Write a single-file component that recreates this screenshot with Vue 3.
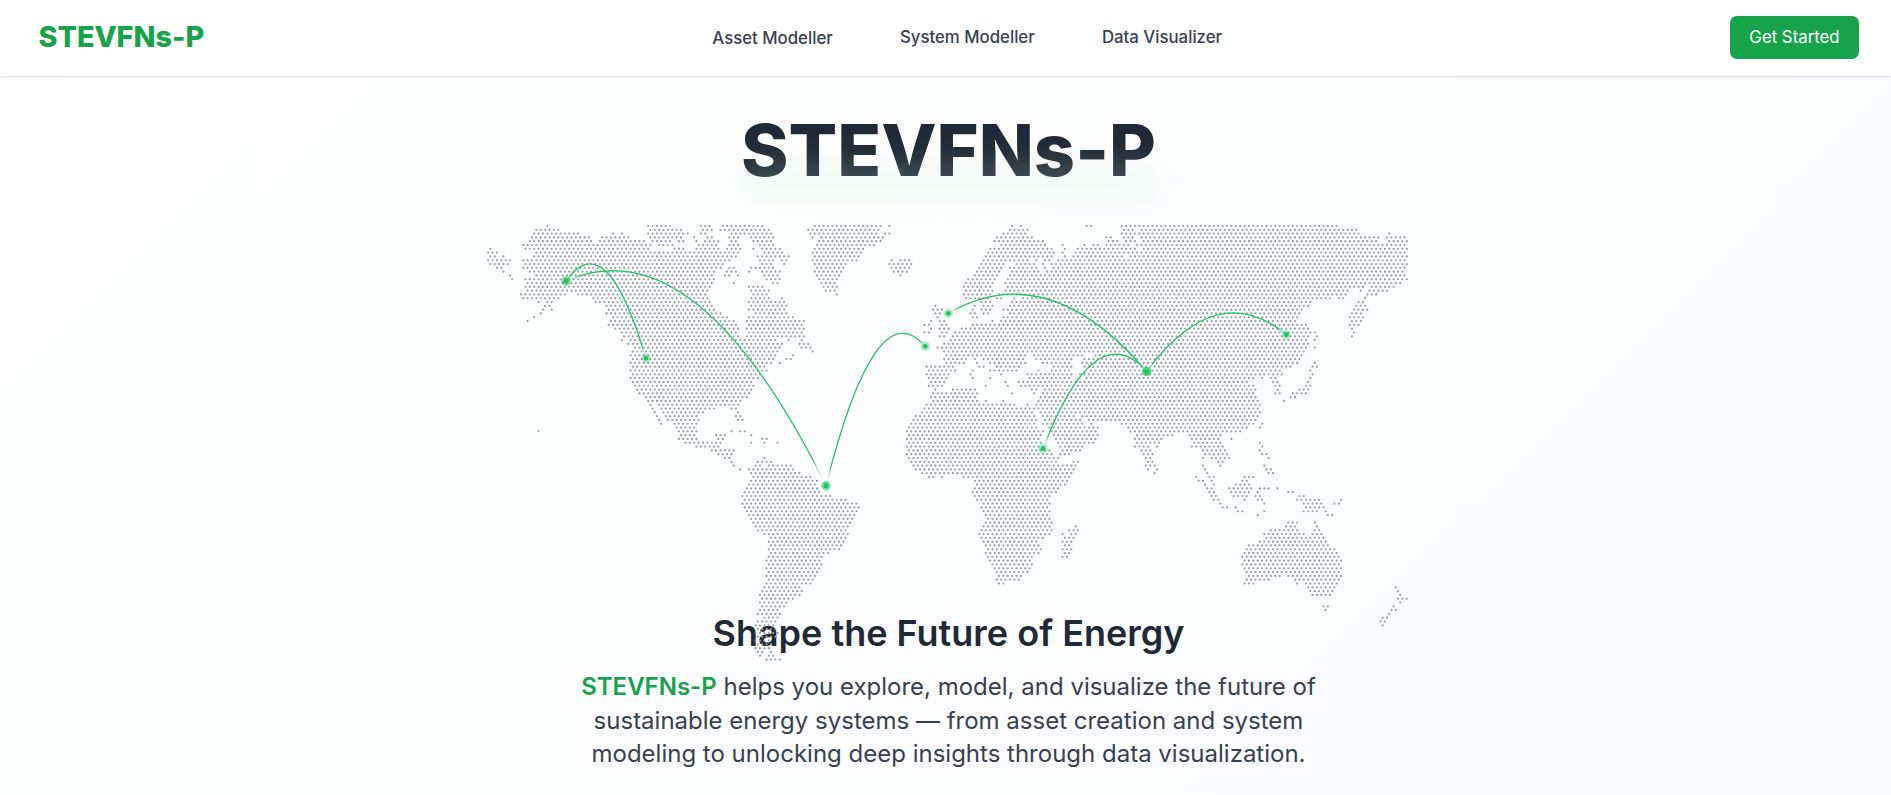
<script setup>
// Horizontal runs of land, one entry per dot row: pairs of start and end.
const land = [
  '202 202 505 570 662 690 728 846 1004 1201 1228 1228 1596 1596 1622 1622 1819 1832 1925 2570',
  '167 236 512 604 667 697 718 869 985 1195 1589 1642 1932 1958 1985 2630',
  '163 294 400 400 425 425 505 622 662 680 754 872 989 1190 1215 1228 1570 1635 1925 1960 1978 2638 2728 2728',
  '158 328 367 445 512 600 645 645 685 697 748 768 813 880 998 998 1025 1210 1550 1655 1880 1895 1932 1958 1985 2698 2722 2775',
  '150 328 355 492 520 570 595 610 653 653 682 710 754 767 820 872 1018 1205 1544 1688 1887 1912 1938 1965 1990 2690 2728 2780',
  '130 505 535 560 582 582 650 715 748 775 838 877 1010 1185 1557 1695 1747 1747 1813 1813 1838 1852 1880 1948 1975 2768',
  '30 30 135 510 583 610 650 715 740 780 820 820 845 900 1004 1150 1531 1715 1753 1753 1793 1965 1985 2780',
  '25 50 163 775 850 910 998 1145 1525 1725 1747 1747 1787 1960 1975 2770',
  '30 45 70 70 158 770 838 925 1005 1135 1515 1710 1755 1755 1780 1930 1958 2780',
  '25 90 125 750 845 885 905 920 998 1130 1232 1232 1260 1290 1510 1645 1670 1670 1695 1710 1735 2770',
  '30 85 135 730 850 875 912 912 1005 1100 1228 1293 1502 1570 1603 1662 1688 1688 1715 2775',
  '50 65 128 720 748 762 813 885 1010 1095 1235 1290 1496 1565 1595 1675 1695 1695 1725 2780',
  '70 70 145 700 740 768 807 807 845 900 1005 1085 1240 1280 1490 1560 1590 1675 1700 2768',
  '90 90 165 700 734 747 773 773 850 890 1010 1080 1260 1260 1485 1550 1585 2775',
  '97 97 135 700 858 898 1018 1070 1465 1545 1580 2780',
  '145 690 760 760 880 892 1023 1065 1458 1540 1575 2760',
  '135 685 807 847 1030 1070 1452 1533 1580 2655 2675 2742',
  '142 680 813 870 1037 1065 1458 1540 1575 2600 2642 2642 2668 2720',
  '122 255 290 675 820 860 1070 1070 1452 1535 1557 2595 2662 2690',
  '130 240 340 680 813 867 905 905 1458 1525 1545 1570 1605 1605 1630 2550 2575 2590 2655 2655',
  '175 175 200 215 345 690 807 880 898 912 1505 1530 1590 2490 2635 2650',
  '195 210 380 690 813 925 1366 1366 1480 1480 1505 1535 1595 2485 2630 2655',
  '188 188 213 213 380 700 807 915 1360 1385 1478 1478 1505 1530 1570 2465 2620 2660',
  '183 183 385 720 825 925 1370 1385 1472 1485 1510 1525 1585 2457 2615 2645',
  '162 162 400 740 807 940 1377 1377 1478 1492 1570 2450 2607 2645',
  '142 142 395 765 800 965 1352 1352 1377 1392 1537 1537 1565 2443 2615 2640',
  '385 385 400 765 807 965 1335 1350 1385 1400 1478 1525 1545 2480 2607 2635',
  '412 770 800 970 1352 1352 1375 1410 1445 2485 2617 2617',
  '420 770 807 965 1333 1345 1380 1405 1430 2505 2623 2623',
  '430 780 800 970 1378 1392 1425 2485 2510 2510 2617 2617',
  '425 425 450 890 925 925 965 965 1417 2482 2505 2505',
  '450 905 957 985 1395 2488', '465 900 965 990 1373 2475 2505 2505', '460 892 998 998 1392 2470',
  '455 885 938 938 1400 1640 1665 1810 1840 2465',
  '460 885 920 932 1392 1460 1490 1490 1515 1630 1670 1680 1700 1770 1813 2457',
  '452 870 898 898 1400 1452 1490 1490 1530 1630 1685 1765 1810 2457 2503 2503',
  '460 850 1338 1415 1500 1510 1555 1610 1725 1770 1815 2430 2498 2510',
  '452 855 1345 1430 1478 1478 1525 1615 1675 1675 1720 1770 1835 2400 2490 2490',
  '458 845 1338 1410 1470 1470 1558 1558 1637 1770 1805 2405 2498 2498',
  '452 830 1345 1405 1478 1478 1530 1530 1645 1770 1825 2325 2347 2347 2372 2385 2490 2490',
  '458 820 1350 1395 1577 1577 1620 2300 2378 2392 2485 2485',
  '465 825 1350 1385 1515 1515 1583 1583 1625 2320 2385 2398 2477 2490',
  '472 815 1365 1365 1417 1485 1655 1670 1695 2325 2392 2392 2458 2485',
  '478 808 1360 1490 1597 1597 1662 1662 1690 2322 2385 2398 2438 2477',
  '498 800 1352 1485 1685 2325 2432 2445', '505 785 1360 1492 1515 1515 1570 1570 1680 2335 2412 2412',
  '510 510 537 775 1340 1605 1640 1640 1675 2340', '518 518 545 700 755 765 1333 1665 1680 2335',
  '525 525 550 668 770 770 1325 1655 1685 2340', '530 530 557 650 768 780 1307 1660 1690 1785 1805 2330',
  '537 537 563 650 775 787 1300 1665 1698 1795 1825 2325',
  '543 543 583 650 1293 1665 1695 1805 1832 1832 1925 2320 2347 2347',
  '590 643 1287 1675 1702 1855 1940 2300 2340 2340',
  '175 175 597 650 755 755 780 793 1280 1690 1710 1850 1950 2285',
  '603 643 710 732 813 813 1287 1682 1715 1855 1972 2078 2130 2225',
  '597 650 715 728 847 860 1280 1675 1725 1845 1970 2050 2137 2215 2255 2255',
  '615 725 813 813 853 853 892 892 1287 1688 1732 1835 1977 2040 2140 2225 2340 2340',
  '650 715 1280 1675 1740 1805 1970 2000 2030 2030 2137 2230 2347 2347',
  '695 760 1287 1705 1745 1800 1985 2015 2165 2235 2340 2340',
  '715 755 1280 1715 1740 1765 1990 2015 2175 2240 2347 2360',
  '734 747 853 853 1287 1735 1998 2015 2170 2170 2195 2248 2365 2365',
  '755 755 835 870 1293 1725 1780 1795 2005 2018 2215 2227',
  '760 760 827 840 865 932 1300 1790 2000 2025 2168 2168 2220 2220 2353 2353',
  '780 780 807 940 1307 1785 2007 2007 2030 2030 2175 2175 2360 2373',
  '813 960 1325 1775 2025 2025 2182 2182 2365 2378', '820 990 1347 1360 1385 1385 1450 1770 2148 2148 2188 2200 2293 2320',
  '813 1010 1485 1765 2155 2168 2195 2195 2285 2300', '807 1010 1490 1755 2175 2175 2202 2202 2265 2305',
  '800 1005 1485 1738 2182 2195 2247 2315 2340 2365 2392 2392', '793 1020 1478 1730 2188 2202 2253 2307 2332 2332 2425 2438',
  '787 1050 1485 1710 2195 2208 2260 2300 2327 2340 2458 2472', '793 1100 1490 1702 2202 2215 2293 2293 2333 2347 2450 2517 2583 2583',
  '787 1133 1510 1710 2222 2222 2353 2353 2470 2525 2563 2577', '793 1140 1505 1703 2228 2240 2267 2267 2478 2530',
  '800 1130 1510 1710 2275 2287 2353 2353 2470 2510 2537 2537', '807 1125 1515 1702 2333 2333 2543 2557',
  '813 1120 1525 1710', '820 1112 1518 1715 2425 2452 2505 2505', '827 1105 1512 1710 1785 1785 2418 2445 2510 2510',
  '832 1100 1505 1715 1767 1792 2372 2452 2505 2518', '853 1100 1498 1708 1748 1748 1773 1787 2353 2472 2498 2525',
  '872 1098 1505 1688 1755 1780 2360 2530', '867 1093 1512 1670 1748 1773 2340 2538', '873 1087 1518 1677 1755 1768 2307 2543',
  '867 1078 1525 1677 1748 1773 2300 2563', '873 1045 1518 1675 1755 1768 2293 2570', '867 1025 1525 1655 1748 1760 2287 2577',
  '860 1020 1531 1650 2293 2583', '867 1025 1538 1655 2287 2577', '860 1020 1544 1650 2293 2583', '867 1012 1550 1645 2300 2577',
  '860 1005 1557 1622 2307 2398 2425 2583', '867 1000 1550 1618 2300 2367 2445 2577', '860 992 1557 1570 2293 2320 2452 2452 2478 2570',
  '853 960 2485 2563 2747 2747', '847 965 2492 2557 2753 2753', '840 960 2498 2550 2760 2760', '847 938 2753 2780',
  '840 920 2760 2760', '847 913 2530 2543 2740 2740', '840 892 2537 2537 2735 2747', '833 900 2728 2728', '853 892 2708 2720',
  '833 885 2702 2715', '827 880 2708 2708', '833 885', '827 892', '833 885', '827 870', '833 875', '827 865',
  '833 847 872 872', '840 840 865 878', '860 900'
]
const PITCH = 4.385
const ROW = 3.803

// One path per row, every dot snapped to the staggered grid.
const rows = land.map((text, r) => {
  const v = text.split(' ').map(Number)
  const phase = 59.33 + (r % 2) * PITCH / 2
  const y = 2 + r * ROW
  const xs = []
  for (let i = 0; i < v.length; i += 2) {
    const a = Math.round((v[i] / 3 - 8 - phase) / PITCH)
    const b = Math.round((v[i + 1] / 3 - 8 - phase) / PITCH)
    for (let k = a; k <= b; k++) xs.push(phase + k * PITCH)
  }
  return xs.map(x => `M${(x - 1.1).toFixed(2)} ${y.toFixed(2)}a1.1 1.1 0 1 0 2.2 0a1.1 1.1 0 1 0-2.2 0`).join('')
})

const P = {
  alaska: [78, 57], west: [158, 134.3], brazil: [338, 261.7], lisbon: [437.3, 122.3],
  london: [460.3, 89.3], delhi: [658.7, 147.4], vladivostok: [798.3, 110.7], nairobi: [555, 224.5]
}
const routes = [['alaska', 'west'], ['alaska', 'brazil'], ['brazil', 'lisbon'], ['london', 'delhi'], ['delhi', 'vladivostok'], ['nairobi', 'delhi']]
const arcs = routes.map(([a, b]) => {
  const [x1, y1] = P[a]
  const [x2, y2] = P[b]
  return `M${x1} ${y1}Q${(x1 + x2) / 2} ${Math.min(y1, y2) - 57.5} ${x2} ${y2}`
})
const pins = routes.flat().map(n => P[n])
</script>

<template>
  <div class="page">
    <header class="bar">
      <div class="logo">STEVFNs-P</div>
      <nav class="nav">
        <a class="low">Asset Modeller</a>
        <a>System Modeller</a>
        <a>Data Visualizer</a>
      </nav>
      <button class="cta">Get Started</button>
    </header>
    <main class="hero">
      <h1 class="title"><span>STEVFNs-P</span><i class="glow"></i></h1>
      <div class="map">
        <svg width="920" height="460" viewBox="0 0 920 460">
          <defs>
            <linearGradient id="route">
              <stop offset="0" stop-color="#fff" stop-opacity="0" />
              <stop offset=".05" stop-color="#22c55e" />
              <stop offset=".95" stop-color="#22c55e" />
              <stop offset="1" stop-color="#fff" stop-opacity="0" />
            </linearGradient>
          </defs>
          <g fill="#949aa8"><path v-for="(d, i) in rows" :key="i" :d="d" /></g>
          <g fill="none" stroke="url(#route)" stroke-width="1.3"><path v-for="d in arcs" :key="d" :d="d" /></g>
          <g fill="#22c55e">
            <template v-for="(p, i) in pins" :key="i">
              <circle :cx="p[0]" :cy="p[1]" r="2.4" />
              <circle :cx="p[0]" :cy="p[1]" r="4.7" opacity=".35" />
            </template>
          </g>
        </svg>
      </div>
      <h2 class="headline">Shape the Future of Energy</h2>
      <p class="lead"><b>STEVFNs-P</b> helps you explore, model, and visualize the future of<br>sustainable energy systems — from asset creation and system<br>modeling to unlocking deep insights through data visualization.</p>
    </main>
  </div>
</template>

<style>
html, body { overflow: hidden; }
</style>
<style scoped>
.page {
  height: 795px;
  display: flex;
  flex-direction: column;
  overflow: hidden;
  font-family: Inter, "Liberation Sans", sans-serif;
  background: linear-gradient(135deg, #fefffe 0%, #fdfefe 35%, #fbfcff 75%, #fbfcff 100%);
}
.bar {
  position: relative;
  z-index: 2;
  flex: none;
  height: 76px;
  box-sizing: border-box;
  padding: 0 32px 0 38.4px;
  display: flex;
  justify-content: space-between;
  align-items: center;
  background: #fff;
  box-shadow: 0 1px 3px rgba(0, 0, 0, .1), 0 1px 2px -1px rgba(0, 0, 0, .1);
}
.logo { color: #16a34a; font-size: 28.8px; font-weight: 800; line-height: 36px; margin-top: -3px; }
.nav { display: flex; gap: 67.2px; color: #374151; font-size: 16.8px; font-weight: 500; line-height: 24px; }
.nav a { margin-top: -1px; margin-bottom: 1px; }
.nav .low { margin-top: 0; margin-bottom: 0; }
.cta {
  width: 129px;
  height: 43px;
  margin-top: -1px;
  padding: 0 0 2px;
  border: 0;
  border-radius: 7px;
  background: #16a34a;
  color: #fff;
  font: 400 16.8px/24px Inter, "Liberation Sans", sans-serif;
}
.hero { display: flex; flex-direction: column; align-items: center; padding-left: 6px; }
.title {
  position: relative;
  margin: 26px 0 0;
  height: 96px;
  font-size: 72px;
  font-weight: 800;
  line-height: 96px;
  color: #1f2937;
}
.glow {
  position: absolute;
  left: 0;
  right: 0;
  top: 65px;
  height: 30px;
  background: #bbf0d0;
  opacity: .25;
  filter: blur(16px);
}
.map { position: relative; z-index: 1; width: 920px; height: 460px; margin: 26px 1px 0 0; }
.map svg { display: block; overflow: visible; }
.headline { margin: -71px 0 0; font-size: 36px; font-weight: 600; line-height: 40px; color: #1f2937; }
.lead { margin: 17px 0 0; font-size: 24px; line-height: 33.6px; text-align: center; color: #374151; white-space: nowrap; }
.lead b { color: #16a34a; font-weight: 600; }
</style>
